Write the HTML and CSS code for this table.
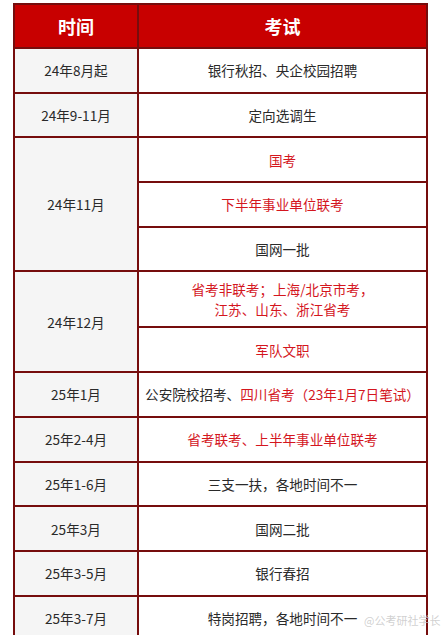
FILE: index.html
```html
<!DOCTYPE html>
<html lang="zh">
<head>
<meta charset="utf-8">
<link rel="stylesheet" href="styles.css">
</head>
<body>
<div class="page">
<table class="sched">
  <thead>
    <tr><th class="c-time">时间</th><th class="c-exam">考试</th></tr>
  </thead>
  <tbody>
    <tr><td class="t">24年8月起</td><td>银行秋招、央企校园招聘</td></tr>
    <tr><td class="t">24年9-11月</td><td>定向选调生</td></tr>
    <tr><td class="t" rowspan="3">24年11月</td><td class="red">国考</td></tr>
    <tr><td class="red">下半年事业单位联考</td></tr>
    <tr><td>国网一批</td></tr>
    <tr><td class="t" rowspan="2">24年12月</td><td class="red tall">省考非联考；上海/北京市考，<br>江苏、山东、浙江省考</td></tr>
    <tr><td class="red">军队文职</td></tr>
    <tr><td class="t">25年1月</td><td>公安院校招考、<span class="redt">四川省考（23年1月7日笔试）</span></td></tr>
    <tr><td class="t">25年2-4月</td><td class="red">省考联考、上半年事业单位联考</td></tr>
    <tr><td class="t">25年1-6月</td><td>三支一扶，各地时间不一</td></tr>
    <tr><td class="t">25年3月</td><td>国网二批</td></tr>
    <tr><td class="t">25年3-5月</td><td>银行春招</td></tr>
    <tr><td class="t">25年3-7月</td><td>特岗招聘，各地时间不一</td></tr>
  </tbody>
</table>
<div class="wm">@公考研社学长</div>
</div>
</body>
</html>
```
FILE: styles.css
```css
html, body {
  margin: 0;
  padding: 0;
  background: #ffffff;
}
body {
  font-family: "Noto Sans CJK SC", "Noto Sans", sans-serif;
  color: #2a2a2a;
  overflow: hidden;
}
.page {
  position: relative;
  width: 446px;
  height: 635px;
  padding: 3px 0 0 13px;
  box-sizing: border-box;
}
.sched {
  border-collapse: collapse;
  width: 415px;
  table-layout: fixed;
}
.sched th, .sched td {
  border: 2px solid #760d0d;
  text-align: center;
  padding: 0;
  font-size: 13.6px;
  line-height: 18px;
}
.sched th {
  background: #c80000;
  color: #fff;
  font-size: 18px;
  font-weight: bold;
  height: 42px;
}
.c-time { width: 122px; }
.sched td {
  height: 42.7px;
}
.sched td.t {
  background: #f5f5f5;
}
.sched td.tall {
  height: 54px;
  line-height: 20px;
}
.red, .redt {
  color: #d4161e;
}
.wm {
  position: absolute;
  left: 364px;
  top: 612px;
  font-size: 11px;
  color: rgba(200, 200, 200, 0.85);
  white-space: nowrap;
}
```
